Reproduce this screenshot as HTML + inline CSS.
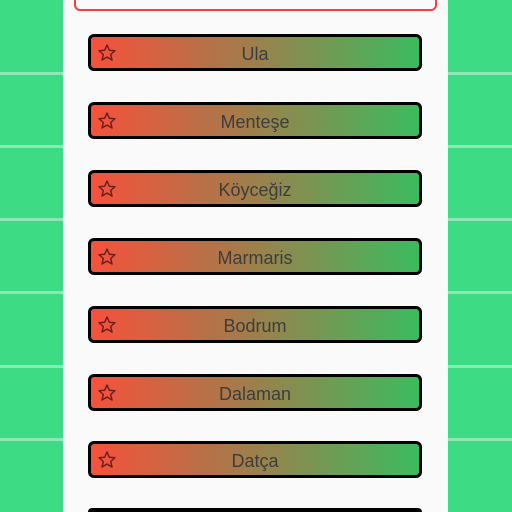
<!DOCTYPE html><html><head><style>
html,body{margin:0;width:512px;height:512px;overflow:hidden}
#w{position:relative;width:512px;height:512px;overflow:hidden;background:#3ddc84;font-family:"Liberation Sans",sans-serif}
.ln{position:absolute;left:0;width:512px;height:3px;background:#8ee8b6}
.panel{position:absolute;left:63px;top:0;width:385px;height:512px;background:#fafafa}
.search{position:absolute;left:74px;top:0;width:359px;height:9px;border:2px solid #f44336;border-top:none;border-radius:0 0 6px 6px;background:#fafafa}
.b{position:absolute;left:88px;width:328px;height:31px;border:3px solid #000;border-radius:6px;background:linear-gradient(90deg,#f6513b,#a67a4a 45%,#3bbb5e);text-align:center;line-height:35px;font-size:18px;color:#3d3d3d}
.b svg{position:absolute;left:6px;top:6px}
</style></head><body><div id="w">
<div class="ln" style="top:72px"></div><div class="ln" style="top:145px"></div><div class="ln" style="top:218px"></div><div class="ln" style="top:291px"></div><div class="ln" style="top:365px"></div><div class="ln" style="top:438px"></div>
<div class="panel"></div>
<div class="search"></div>
<div class="b" style="top:34px"><svg width="20" height="20" viewBox="0 0 24 24"><path d="M12 2.5l2.8 6.2 6.7.6-5.1 4.5 1.6 6.6L12 16.9l-6 3.5 1.6-6.6-5.1-4.5 6.7-.6z" fill="none" stroke="#6b2020" stroke-width="1.8" stroke-linejoin="round"/></svg>Ula</div>
<div class="b" style="top:102px"><svg width="20" height="20" viewBox="0 0 24 24"><path d="M12 2.5l2.8 6.2 6.7.6-5.1 4.5 1.6 6.6L12 16.9l-6 3.5 1.6-6.6-5.1-4.5 6.7-.6z" fill="none" stroke="#6b2020" stroke-width="1.8" stroke-linejoin="round"/></svg>Menteşe</div>
<div class="b" style="top:170px"><svg width="20" height="20" viewBox="0 0 24 24"><path d="M12 2.5l2.8 6.2 6.7.6-5.1 4.5 1.6 6.6L12 16.9l-6 3.5 1.6-6.6-5.1-4.5 6.7-.6z" fill="none" stroke="#6b2020" stroke-width="1.8" stroke-linejoin="round"/></svg>Köyceğiz</div>
<div class="b" style="top:238px"><svg width="20" height="20" viewBox="0 0 24 24"><path d="M12 2.5l2.8 6.2 6.7.6-5.1 4.5 1.6 6.6L12 16.9l-6 3.5 1.6-6.6-5.1-4.5 6.7-.6z" fill="none" stroke="#6b2020" stroke-width="1.8" stroke-linejoin="round"/></svg>Marmaris</div>
<div class="b" style="top:306px"><svg width="20" height="20" viewBox="0 0 24 24"><path d="M12 2.5l2.8 6.2 6.7.6-5.1 4.5 1.6 6.6L12 16.9l-6 3.5 1.6-6.6-5.1-4.5 6.7-.6z" fill="none" stroke="#6b2020" stroke-width="1.8" stroke-linejoin="round"/></svg>Bodrum</div>
<div class="b" style="top:374px"><svg width="20" height="20" viewBox="0 0 24 24"><path d="M12 2.5l2.8 6.2 6.7.6-5.1 4.5 1.6 6.6L12 16.9l-6 3.5 1.6-6.6-5.1-4.5 6.7-.6z" fill="none" stroke="#6b2020" stroke-width="1.8" stroke-linejoin="round"/></svg>Dalaman</div>
<div class="b" style="top:441px"><svg width="20" height="20" viewBox="0 0 24 24"><path d="M12 2.5l2.8 6.2 6.7.6-5.1 4.5 1.6 6.6L12 16.9l-6 3.5 1.6-6.6-5.1-4.5 6.7-.6z" fill="none" stroke="#6b2020" stroke-width="1.8" stroke-linejoin="round"/></svg>Datça</div>
<div style="position:absolute;left:88px;top:508px;width:334px;height:4px;background:#000;border-radius:6px 6px 0 0"></div>
</div></body></html>
